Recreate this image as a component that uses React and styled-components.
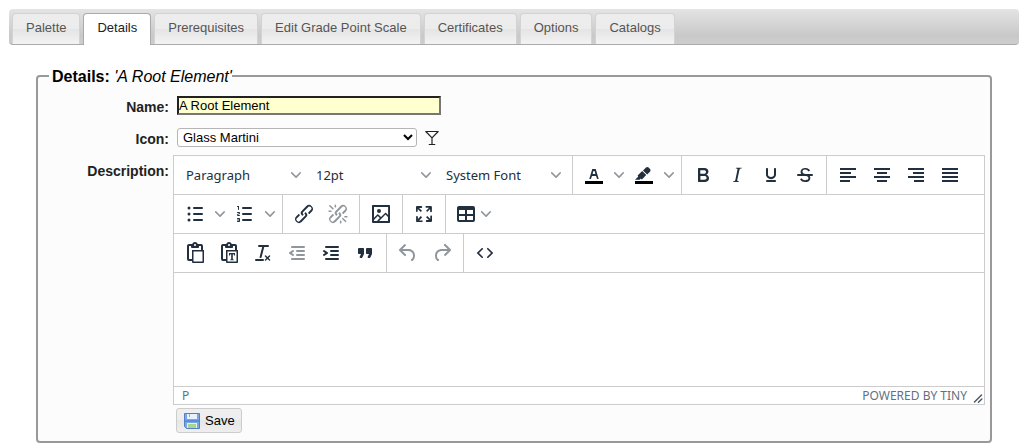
import React from "react";
import styled, { createGlobalStyle, css } from "styled-components";

const GlobalStyle = createGlobalStyle`
  * { box-sizing: border-box; }
  body {
    margin: 0;
    background: #fff;
    color: #222;
    font-family: "Liberation Sans", Arial, sans-serif;
    font-size: 13px;
  }
  button, input, select, textarea { font-family: inherit; font-size: 13px; }
`;

const Page = styled.main`
  padding: 9px 2px 0 9px;
`;

const TabBar = styled.div`
  display: flex;
  align-items: flex-start;
  gap: 3px;
  padding: 4px 3px 0;
  border-bottom: 1px solid #aaa;
  border-radius: 4px;
  background: linear-gradient(#e4e4e4, #c9c9c9 75%, #cdcdcd);
`;

const Tab = styled.button`
  padding: 6px 13px 8px;
  border: 1px solid #d3d3d3;
  border-bottom: 0;
  border-radius: 4px 4px 0 0;
  background: linear-gradient(#ededed, #ececec 50%, #e4e4e4 50%, #f3f3f3);
  color: #555;
  line-height: 16px;
  white-space: nowrap;
  ${(p) =>
    p["aria-selected"] &&
    css`
      margin-bottom: -1px;
      padding-bottom: 9px;
      border-color: #aaa;
      background: #fff;
      color: #212121;
    `}
`;

const Panel = styled.fieldset`
  min-width: 0;
  margin: 21px 27px 0;
  padding: 10px 5px 8px 0;
  border: 2px solid #999;
  border-radius: 4px;
  background: #fcfcfc;
`;

const Legend = styled.legend`
  margin-left: 11px;
  padding: 2px 0 0 3px;
  color: #000;
  font-size: 16px;
  line-height: 18px;
`;

const Row = styled.div`
  display: flex;
  gap: 4px;
  margin-bottom: ${(p) => p.$gap}px;
`;

const Label = styled.label`
  flex: 0 0 131px;
  padding-top: ${(p) => (p.$tall ? 8 : 3)}px;
  font-size: 14px;
  font-weight: bold;
  line-height: 16px;
  text-align: right;
`;

const Field = styled.div`
  display: flex;
  align-items: center;
  gap: 8px;
  height: 19px;
  padding-left: 4px;
`;

const NameInput = styled.input`
  width: 264px;
  height: 19px;
  padding: 0;
  border: 2px inset #767676;
  background: #ffffcf;
  color: #000;
`;

const IconSelect = styled.select`
  width: 240px;
  height: 19px;
  padding: 0 0 0 1px;
  border: 1px solid #b5b5b5;
  border-radius: 3px;
  background-color: #fff;
  color: #000;
`;

const Editor = styled.div`
  flex: 1;
  min-width: 0;
  border: 1px solid #ccc;
  background: #fff;
  color: #222f3e;
  font-family: "Noto Sans", "Open Sans", sans-serif;
`;

const ToolRow = styled.div`
  display: flex;
  height: 39px;
  border-bottom: 1px solid #ccc;
`;

const Group = styled.div`
  display: flex;
  align-items: center;
  padding: 0 4px;
  &:not(:last-child) { border-right: 1px solid #ccc; }
`;

const Tool = styled.button`
  display: flex;
  align-items: center;
  justify-content: center;
  width: ${(p) => p.$width || 34}px;
  height: 34px;
  padding: 0;
  border: 0;
  background: none;
  color: inherit;
  gap: 3px;
  &:disabled { color: #222f3e; opacity: 0.5; }
`;

const PickerTool = styled(Tool)`
  justify-content: space-between;
  width: 130px;
  padding: 0 7px 0 8px;
`;

const Area = styled.textarea`
  display: block;
  width: 100%;
  height: 113px;
  padding: 8px;
  border: 0;
  outline: 0;
  resize: none;
`;

const StatusBar = styled.div`
  display: flex;
  align-items: center;
  justify-content: space-between;
  height: 18px;
  padding: 0 1px 0 8px;
  border-top: 1px solid #ccc;
  color: #64707d;
  font-size: 12px;
  line-height: 16px;
`;

const StatusEnd = styled.span`
  display: flex;
  align-items: flex-end;
  gap: 6px;
`;

const PlainLink = styled.a`
  color: inherit;
  text-decoration: none;
`;

const SaveButton = styled.button`
  display: flex;
  align-items: center;
  gap: 5px;
  height: 25px;
  margin: 3px 0 0 138px;
  padding: 0 6px 0 7px;
  border: 1px solid #ccc;
  border-radius: 3px;
  background: linear-gradient(#efefef, #ededed 50%, #e6e6e6 50%, #eee);
  color: #000;
`;

const glyphs = {
  bold: "M7.8 19c-.3 0-.5 0-.6-.2l-.2-.5V5.7c0-.2 0-.4.2-.5l.6-.2h5c1.5 0 2.7.3 3.5 1 .7.6 1.1 1.4 1.1 2.5a3 3 0 0 1-.6 1.9c-.4.6-1 1-1.6 1.2.4.1.9.3 1.3.6s.8.7 1 1.2c.4.4.5 1 .5 1.6 0 1.3-.4 2.3-1.3 3-.8.7-2.1 1-3.8 1H7.8zm5-8.3c.6 0 1.2-.1 1.6-.5.4-.3.6-.7.6-1.3 0-1.1-.8-1.7-2.3-1.7H9.3v3.5h3.4zm.5 6c.7 0 1.3-.1 1.7-.4.4-.4.6-.9.6-1.5s-.2-1-.7-1.4c-.4-.3-1-.4-2-.4H9.4v3.8h4z",
  italic: "M16.7 4.7l-.1.9h-.3c-.6 0-1 0-1.4.3-.3.3-.4.6-.5 1.1l-2.1 9.8v.6c0 .5.4.8 1.4.8h.2l-.2.8H8l.2-.8h.2c1.1 0 1.8-.5 2-1.5l2-9.8.1-.5c0-.6-.4-.8-1.4-.8h-.3l.2-.9h5.8z",
  underline: "M16 5c.6 0 1 .4 1 1v5.5a4 4 0 0 1-.4 1.8l-1 1.4a5.3 5.3 0 0 1-5.5 1 5 5 0 0 1-1.6-1c-.5-.4-.8-.9-1.1-1.4a4 4 0 0 1-.4-1.8V6c0-.6.4-1 1-1s1 .4 1 1v5.5c0 .3 0 .6.2 1l.6.7a3.3 3.3 0 0 0 2.2.8 3.4 3.4 0 0 0 2.2-.8c.3-.2.4-.5.6-.8l.2-.9V6c0-.6.4-1 1-1zM8 17h8c.6 0 1 .4 1 1s-.4 1-1 1H8a1 1 0 0 1 0-2z",
  strike: "M15.6 8.5c-.5-.7-1-1.1-1.3-1.3-.6-.4-1.3-.6-2-.6-2.7 0-2.8 1.7-2.8 2.1 0 1.6 1.8 2 3.2 2.3 4.4.9 4.6 2.8 4.6 3.9 0 1.4-.7 4.1-5 4.1A6.2 6.2 0 0 1 7 16.4l1.5-1.1c.4.6 1.6 2 3.7 2 1.6 0 2.5-.4 3-1.2.4-.8.3-2-.8-2.6-.7-.4-1.6-.7-2.9-1-1-.2-3.9-.8-3.9-3.6C7.6 6 10.3 5 12.4 5c2.9 0 4.2 1.6 4.7 2.4l-1.5 1.1z",
  color: "M8.7 16h-.8a.5.5 0 0 1-.5-.6l2.7-9c.1-.3.3-.4.5-.4h2.8c.2 0 .4.1.5.4l2.7 9a.5.5 0 0 1-.5.6h-.8a.5.5 0 0 1-.4-.4l-.7-2.2c0-.3-.3-.4-.5-.4h-3.4c-.2 0-.4.1-.5.4l-.7 2.2c0 .3-.2.4-.4.4zm2.6-7.6l-.6 2a.5.5 0 0 0 .5.6h1.6a.5.5 0 0 0 .5-.6l-.6-2c0-.3-.3-.4-.5-.4h-.4c-.2 0-.4.1-.5.4z",
  highlight: "M7.7 16.7H3l3.3-3.3-.7-.8L10.2 8l4 4.1-4 4.2c-.2.2-.6.2-.8 0l-.6-.7-1.1 1.1zm5-7.5L11 7.4l3-2.9a2 2 0 0 1 2.6 0L18 6c.7.7.7 2 0 2.7l-2.9 2.9-1.8-1.8-.5-.6z",
  alignLeft: "M4 5h16v2H4zM4 9h11v2H4zM4 13h16v2H4zM4 17h10v2H4z",
  alignCenter: "M4 5h16v2H4zM7 9h10v2H7zM4 13h16v2H4zM7 17h10v2H7z",
  alignRight: "M4 5h16v2H4zM9 9h11v2H9zM4 13h16v2H4zM10 17h10v2H10z",
  justify: "M4 5h16v2H4zM4 9h16v2H4zM4 13h16v2H4zM4 17h16v2H4z",
  bullets: "M11 5h8a1 1 0 0 1 0 2h-8a1 1 0 0 1 0-2zm0 6h8a1 1 0 0 1 0 2h-8a1 1 0 0 1 0-2zm0 6h8a1 1 0 0 1 0 2h-8a1 1 0 0 1 0-2zM4.5 6a1.5 1.5 0 1 1 3 0 1.5 1.5 0 0 1-3 0zm0 6a1.5 1.5 0 1 1 3 0 1.5 1.5 0 0 1-3 0zm0 6a1.5 1.5 0 1 1 3 0 1.5 1.5 0 0 1-3 0z",
  numbers: "M10 17h8a1 1 0 0 1 0 2h-8a1 1 0 0 1 0-2zm0-6h8a1 1 0 0 1 0 2h-8a1 1 0 0 1 0-2zm0-6h8a1 1 0 0 1 0 2h-8a1 1 0 1 1 0-2zM6 4v3.5c0 .3-.2.5-.5.5a.5.5 0 0 1-.5-.5V5h-.5a.5.5 0 0 1 0-1H6zm-1 8.8l.2.2h1.3c.3 0 .5.2.5.5s-.2.5-.5.5H4.9a1 1 0 0 1-.9-1V13c0-.4.3-.8.6-1l1.2-.4.2-.3a.2.2 0 0 0-.2-.2H4.5a.5.5 0 0 1-.5-.5c0-.3.2-.5.5-.5h1.6c.5 0 .9.4.9 1v.1c0 .4-.3.8-.6 1l-1.2.4-.2.3zM7 17v2c0 .6-.4 1-1 1H4.5a.5.5 0 0 1 0-1h1.2c.2 0 .3-.1.3-.3 0-.2-.1-.3-.3-.3H4.4a.4.4 0 1 1 0-.8h1.3c.2 0 .3-.1.3-.3 0-.2-.1-.3-.3-.3H4.5a.5.5 0 1 1 0-1H6c.6 0 1 .4 1 1z",
  link: "M6.2 12.3a1 1 0 0 1 1.4 1.4l-2.1 2a2 2 0 1 0 2.7 2.8l4.8-4.8a1 1 0 0 0 0-1.4 1 1 0 1 1 1.4-1.3 2.9 2.9 0 0 1 0 4L9.6 20a3.9 3.9 0 0 1-5.5-5.5l2-2zm11.6-.6a1 1 0 0 1-1.4-1.4l2-2a2 2 0 1 0-2.6-2.8L11 10.3a1 1 0 0 0 0 1.4A1 1 0 1 1 9.6 13a2.9 2.9 0 0 1 0-4L14.4 4a3.9 3.9 0 0 1 5.5 5.5l-2 2z",
  sparks: "M7.6 6.3a.8.8 0 0 1-1 1.1L3.3 4.2a.7.7 0 1 1 1-1l3.2 3.1zM5.1 8.6a.8.8 0 0 1 0 1.5H3a.8.8 0 0 1 0-1.5H5zm5-3.5a.8.8 0 0 1-1.5 0V3a.8.8 0 0 1 1.5 0V5zm6 11.8a.8.8 0 0 1 1-1l3.2 3.2a.8.8 0 0 1-1 1L16 17zm-2.2 2a.8.8 0 0 1 1.5 0V21a.8.8 0 0 1-1.5 0V19zm5-3.5a.7.7 0 1 1 0-1.5H21a.8.8 0 0 1 0 1.5H19z",
  image: "M5 15.7l3.3-3.2c.3-.3.7-.3 1 0L12 15l4.1-4c.3-.4.8-.4 1 0l2 1.9V5H5v10.7zM5 18V19h3l2.8-2.9-2-2L5 17.9zm14-3l-2.5-2.4-6.4 6.5H19v-4zM4 3h16c.6 0 1 .4 1 1v16c0 .6-.4 1-1 1H4a1 1 0 0 1-1-1V4c0-.6.4-1 1-1zm6 8a2 2 0 1 0 0-4 2 2 0 0 0 0 4z",
  fullscreen: "M15.3 10l-1.2-1.3 2.9-3h-2.3a.9.9 0 1 1 0-1.7H19c.5 0 .9.4.9.9v4.4a.9.9 0 1 1-1.8 0V7l-2.9 3zm0 4l3 3v-2.3a.9.9 0 1 1 1.7 0V19c0 .5-.4.9-.9.9h-4.4a.9.9 0 1 1 0-1.8H17l-3-2.9 1.3-1.2zM10 15.4l-2.9 3h2.3a.9.9 0 1 1 0 1.7H5a.9.9 0 0 1-.9-.9v-4.4a.9.9 0 1 1 1.8 0V17l2.9-3 1.2 1.3zM8.7 10L5.7 7v2.3a.9.9 0 0 1-1.7 0V5c0-.5.4-.9.9-.9h4.4a.9.9 0 0 1 0 1.8H7l3 2.9-1.3 1.2z",
  table: "M19 4a2 2 0 0 1 2 2v12a2 2 0 0 1-2 2H5a2 2 0 0 1-2-2V6c0-1.1.9-2 2-2h14zM5 14v4h6v-4H5zm14 0h-6v4h6v-4zm0-6h-6v4h6V8zM5 12h6V8H5v4z",
  paste: "M18 9V5h-2v1c0 .6-.4 1-1 1H9a1 1 0 0 1-1-1V5H6v13h3V9h9zM9 20H6a2 2 0 0 1-2-2V5c0-1.1.9-2 2-2h3.2A3 3 0 0 1 12 1a3 3 0 0 1 2.8 2H18a2 2 0 0 1 2 2v4h1v12c0 .6-.4 1-1 1H10a1 1 0 0 1-1-1v-1zm1.5-9.5v10h9v-10h-9zM12 3a1 1 0 0 0-1 1c0 .5.4 1 1 1s1-.5 1-1-.4-1-1-1z",
  clear: "M13.2 6a1 1 0 0 1 0 .2l-2.6 10a1 1 0 0 1-1 .8h-.2a.8.8 0 0 1-.8-1l2.6-10H8a1 1 0 1 1 0-2h9a1 1 0 0 1 0 2h-3.8zM5 18h7a1 1 0 0 1 0 2H5a1 1 0 0 1 0-2zm13 1.5L16.5 18 15 19.5a.7.7 0 0 1-1-1l1.5-1.5-1.5-1.5a.7.7 0 0 1 1-1l1.5 1.5 1.5-1.5a.7.7 0 0 1 1 1L17.5 17l1.5 1.5a.7.7 0 0 1-1 1z",
  outdent: "M7 5h12a1 1 0 0 1 0 2H7a1 1 0 1 1 0-2zm5 4h7a1 1 0 0 1 0 2h-7a1 1 0 0 1 0-2zm0 4h7a1 1 0 0 1 0 2h-7a1 1 0 0 1 0-2zm-5 4h12a1 1 0 0 1 0 2H7a1 1 0 0 1 0-2zm1.6-3.8a1 1 0 0 1-1.2 1.6l-3-2a1 1 0 0 1 0-1.6l3-2a1 1 0 0 1 1.2 1.6L6.8 12l1.8 1.2z",
  indent: "M7 5h12a1 1 0 0 1 0 2H7a1 1 0 1 1 0-2zm5 4h7a1 1 0 0 1 0 2h-7a1 1 0 0 1 0-2zm0 4h7a1 1 0 0 1 0 2h-7a1 1 0 0 1 0-2zm-5 4h12a1 1 0 0 1 0 2H7a1 1 0 0 1 0-2zm-2.6-3.8L6.2 12l-1.8-1.2a1 1 0 0 1 1.2-1.6l3 2a1 1 0 0 1 0 1.6l-3 2a1 1 0 1 1-1.2-1.6z",
  quote: "M7.5 17h.9c.4 0 .7-.2.9-.6L11 13V8c0-.6-.4-1-1-1H6a1 1 0 0 0-1 1v4c0 .6.4 1 1 1h2l-1.3 2.7a1 1 0 0 0 .8 1.3zm8 0h.9c.4 0 .7-.2.9-.6L19 13V8c0-.6-.4-1-1-1h-4a1 1 0 0 0-1 1v4c0 .6.4 1 1 1h2l-1.3 2.7a1 1 0 0 0 .8 1.3z",
  undo: "M6.4 8H12c3.7 0 6.2 2 6.8 5.1.6 2.7-.4 5.6-2.3 6.8a1 1 0 0 1-1-1.8c1.1-.6 1.8-2.7 1.4-4.6-.5-2.1-2.1-3.5-4.9-3.5H6.4l3.3 3.3a1 1 0 1 1-1.4 1.4l-5-5a1 1 0 0 1 0-1.4l5-5a1 1 0 0 1 1.4 1.4L6.4 8z",
  redo: "M17.6 10H12c-2.8 0-4.4 1.4-4.9 3.5-.4 2 .3 4 1.4 4.6a1 1 0 1 1-1 1.8c-2-1.2-2.9-4.1-2.3-6.8.6-3 3-5.1 6.8-5.1h5.6l-3.3-3.3a1 1 0 1 1 1.4-1.4l5 5a1 1 0 0 1 0 1.4l-5 5a1 1 0 0 1-1.4-1.4l3.3-3.3z",
  code: "M9.8 15.7c.3.3.3.8 0 1-.3.4-.9.4-1.2 0l-4.4-4.1a.8.8 0 0 1 0-1.2l4.4-4.2c.3-.3.9-.3 1.2 0 .3.3.3.8 0 1.1L6 12l3.8 3.7zM14.2 15.7c-.3.3-.3.8 0 1 .4.4.9.4 1.2 0l4.4-4.1c.3-.3.3-.8 0-1.2l-4.4-4.2a.8.8 0 0 0-1.2 0c-.3.3-.3.8 0 1.1L18 12l-3.8 3.7z",
};

const Glyph = ({ name, children }) => (
  <svg width="24" height="24" viewBox="0 0 24 24" fill="currentColor" fillRule="evenodd" aria-hidden="true">
    <path d={glyphs[name]} />
    {children}
  </svg>
);

const Chevron = () => (
  <svg width="10" height="10" viewBox="0 0 10 10" fill="#222f3e" fillOpacity="0.5" aria-hidden="true">
    <path d="M8.7 2.2c.3-.3.8-.3 1 0 .4.4.4.9 0 1.2L5.7 7.8c-.3.3-.9.3-1.2 0L.2 3.4a.8.8 0 0 1 0-1.2c.3-.3.8-.3 1.1 0L5 6l3.7-3.8z" />
  </svg>
);

const IconTool = ({ name, label, disabled, children }) => (
  <Tool type="button" aria-label={label} disabled={disabled}>
    <Glyph name={name}>{children}</Glyph>
  </Tool>
);

const SplitTool = ({ name, label, children }) => (
  <>
    <IconTool name={name} label={label}>{children}</IconTool>
    <Tool type="button" $width={16} aria-label={`${label} options`}>
      <Chevron />
    </Tool>
  </>
);

const Picker = ({ children }) => (
  <PickerTool type="button">
    <span>{children}</span>
    <Chevron />
  </PickerTool>
);

const Swatch = () => <path d="M3 18h18v3H3z" fill="#000" />;

const Martini = () => (
  <svg width="14" height="16" viewBox="0 0 14 16" fill="none" stroke="#222" strokeLinejoin="round" strokeLinecap="round" aria-hidden="true">
    <path d="M.8 1.5h12.4L7 7.8zM7 7.8v6.2M4.2 14.5h5.6" strokeWidth="1.2" />
  </svg>
);

const Floppy = () => (
  <svg width="16" height="16" viewBox="0 0 16 16" aria-hidden="true">
    <path d="M.5.5h15v15h-13l-2-2z" fill="#7ba6e6" stroke="#5580c4" />
    <path d="M3 1h10v5H3z" fill="#e9f1fc" />
    <path d="M5 1h1v3H5z" fill="#8fb0e2" />
    <path d="M1 7h14v2H1z" fill="#5c8cdb" />
    <path d="M3 10h10v5H3z" fill="#e6f2e0" />
    <path d="M4 11h8v4H4z" fill="#a9d58c" />
  </svg>
);

const tabs = ["Palette", "Details", "Prerequisites", "Edit Grade Point Scale", "Certificates", "Options", "Catalogs"];

export default function App() {
  return (
    <Page>
      <GlobalStyle />
      <TabBar role="tablist">
        {tabs.map((t) => (
          <Tab key={t} type="button" role="tab" aria-selected={t === "Details"}>
            {t}
          </Tab>
        ))}
      </TabBar>
      <Panel>
        <Legend>
          <b>Details:</b> <i>'A Root Element'</i>
        </Legend>
        <Row $gap={13}>
          <Label htmlFor="name">Name:</Label>
          <Field>
            <NameInput id="name" defaultValue="A Root Element" />
          </Field>
        </Row>
        <Row $gap={8}>
          <Label htmlFor="icon">Icon:</Label>
          <Field>
            <IconSelect id="icon" defaultValue="Glass Martini">
              <option>Glass Martini</option>
            </IconSelect>
            <Martini />
          </Field>
        </Row>
        <Row $gap={0}>
          <Label htmlFor="description" $tall>Description:</Label>
          <Editor>
            <ToolRow>
              <Group>
                <Picker>Paragraph</Picker>
                <Picker>12pt</Picker>
                <Picker>System Font</Picker>
              </Group>
              <Group>
                <SplitTool name="color" label="Text color"><Swatch /></SplitTool>
                <SplitTool name="highlight" label="Background color"><Swatch /></SplitTool>
              </Group>
              <Group>
                <IconTool name="bold" label="Bold" />
                <IconTool name="italic" label="Italic" />
                <IconTool name="underline" label="Underline" />
                <IconTool name="strike" label="Strikethrough">
                  <path d="M5 11h14a1 1 0 0 1 0 2H5a1 1 0 0 1 0-2z" />
                </IconTool>
              </Group>
              <Group>
                <IconTool name="alignLeft" label="Align left" />
                <IconTool name="alignCenter" label="Align center" />
                <IconTool name="alignRight" label="Align right" />
                <IconTool name="justify" label="Justify" />
              </Group>
            </ToolRow>
            <ToolRow>
              <Group>
                <SplitTool name="bullets" label="Bullet list" />
                <SplitTool name="numbers" label="Numbered list" />
              </Group>
              <Group>
                <IconTool name="link" label="Insert link" />
                <IconTool name="link" label="Remove link" disabled>
                  <path d={glyphs.sparks} />
                </IconTool>
              </Group>
              <Group>
                <IconTool name="image" label="Insert image" />
              </Group>
              <Group>
                <IconTool name="fullscreen" label="Fullscreen" />
              </Group>
              <Group>
                <Tool type="button" $width={45} aria-label="Table">
                  <Glyph name="table" />
                  <Chevron />
                </Tool>
              </Group>
            </ToolRow>
            <ToolRow>
              <Group>
                <IconTool name="paste" label="Paste" />
                <IconTool name="paste" label="Paste as text">
                  <path d="M12 12h6v2.5h-1l-.3-1.2h-.9v4.9l.9.2v.8h-3.4v-.8l.9-.2v-4.9h-.9l-.3 1.2h-1z" />
                </IconTool>
                <IconTool name="clear" label="Clear formatting" />
                <IconTool name="outdent" label="Decrease indent" disabled />
                <IconTool name="indent" label="Increase indent" />
                <IconTool name="quote" label="Blockquote" />
              </Group>
              <Group>
                <IconTool name="undo" label="Undo" disabled />
                <IconTool name="redo" label="Redo" disabled />
              </Group>
              <Group>
                <IconTool name="code" label="Source code" />
              </Group>
            </ToolRow>
            <Area id="description" />
            <StatusBar>
              <span>P</span>
              <StatusEnd>
                <PlainLink href="#tiny">POWERED BY TINY</PlainLink>
                <svg width="10" height="10" viewBox="0 0 10 10" stroke="#4e5965" strokeWidth="1.5" strokeLinecap="round" aria-hidden="true">
                  <path d="M1.5 8L8.5 1M5.5 8.2L8.8 5" />
                </svg>
              </StatusEnd>
            </StatusBar>
          </Editor>
        </Row>
        <SaveButton type="button">
          <Floppy />
          Save
        </SaveButton>
      </Panel>
    </Page>
  );
}
